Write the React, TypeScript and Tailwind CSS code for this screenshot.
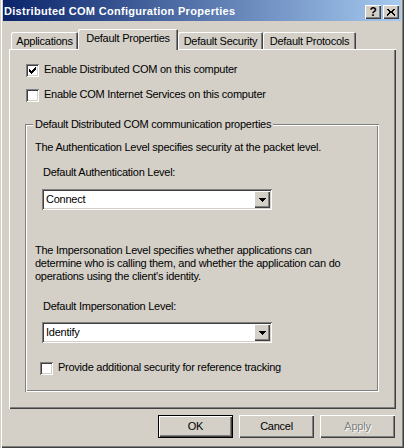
import React from "react";

const raised =
  "shadow-[inset_1px_1px_0_#fff,inset_-1px_-1px_0_#404040,inset_-2px_-2px_0_#808080]";
const sunken =
  "shadow-[inset_1px_1px_0_#808080,inset_-1px_-1px_0_#fff,inset_2px_2px_0_#404040,inset_-2px_-2px_0_#d4d0c8]";
const etched =
  "shadow-[inset_1px_1px_0_#808080,inset_-1px_-1px_0_#fff,inset_2px_2px_0_#fff,inset_-2px_-2px_0_#808080]";

const checkRows = ["......#", ".....##", "#...###", "##.###.", "#####..", ".###...", "..#...."];

function Checkbox({ checked }: { checked?: boolean }) {
  return (
    <div className={`w-[13px] h-[13px] mt-[1px] shrink-0 bg-white ${sunken}`}>
      {checked && (
        <svg width="13" height="13" viewBox="0 0 13 13" shapeRendering="crispEdges">
          {checkRows.map((row, y) =>
            row.split("").map((c, x) =>
              c === "#" ? <rect key={`${x}-${y}`} x={x + 3} y={y + 3} width="1" height="1" fill="#000" /> : null
            )
          )}
        </svg>
      )}
    </div>
  );
}

function CheckRow({ label, checked, className }: { label: string; checked?: boolean; className?: string }) {
  return (
    <div className={`flex items-start gap-[5px] h-[13px] ${className ?? ""}`}>
      <Checkbox checked={checked} />
      <span className="whitespace-nowrap">{label}</span>
    </div>
  );
}

function Combo({ value, className }: { value: string; className?: string }) {
  return (
    <div className={`w-[230px] h-[21px] p-[2px] flex bg-white ${sunken} ${className ?? ""}`}>
      <div className="flex-1 flex items-center pl-[2px]">{value}</div>
      <div className={`w-[16px] h-[17px] bg-[#d4d0c8] flex items-center justify-center ${raised}`}>
        <svg width="7" height="4" viewBox="0 0 7 4" shapeRendering="crispEdges">
          <rect x="0" y="0" width="7" height="1" fill="#000" />
          <rect x="1" y="1" width="5" height="1" fill="#000" />
          <rect x="2" y="2" width="3" height="1" fill="#000" />
          <rect x="3" y="3" width="1" height="1" fill="#000" />
        </svg>
      </div>
    </div>
  );
}

function PushButton({ label, isDefault, disabled }: { label: string; isDefault?: boolean; disabled?: boolean }) {
  const face = (
    <div className={`w-full h-full flex items-center justify-center bg-[#d4d0c8] ${raised}`}>
      <span className={disabled ? "text-[#808080] [text-shadow:1px_1px_0_#fff]" : ""}>{label}</span>
    </div>
  );
  if (isDefault) {
    return <div className="w-[75px] h-[23px] border border-black">{face}</div>;
  }
  return <div className="w-[75px] h-[23px]">{face}</div>;
}

function Tab({ label, width, selected }: { label: string; width: string; selected?: boolean }) {
  return (
    <div
      className={`${width} ${
        selected ? "h-[21px]" : "h-[17px] mb-[1px]"
      } pt-[3px] text-center bg-[#d4d0c8] rounded-t-[2px] shadow-[inset_1px_1px_0_#fff,inset_-1px_0_0_#404040,inset_-2px_0_0_#808080] whitespace-nowrap`}
    >
      {label}
    </div>
  );
}

export default function App() {
  return (
    <div className="w-[404px] h-[448px] px-[3px] bg-[#d4d0c8] text-black text-[11px] leading-[13px] tracking-[-0.25px] font-['Liberation_Sans',Arial,sans-serif] shadow-[inset_1px_0_0_#d4d0c8,inset_2px_0_0_#fff,inset_-1px_-1px_0_#404040,inset_-2px_-2px_0_#808080] overflow-hidden">
      {/* title bar */}
      <div className="h-[21px] flex justify-between pl-[1px] pr-[2px] bg-[linear-gradient(to_right,#0a246a,#a6caf0)]">
        <span className="pt-[5px] font-bold text-white tracking-[0.3px] whitespace-nowrap">
          Distributed COM Configuration Properties
        </span>
        <div className="flex gap-[2px] pt-[5px]">
          <div className={`w-[16px] h-[14px] bg-[#d4d0c8] flex items-center justify-center font-bold text-[12px] leading-[14px] ${raised}`}>
            ?
          </div>
          <div className={`w-[16px] h-[14px] bg-[#d4d0c8] flex items-center justify-center ${raised}`}>
            <svg width="8" height="7" viewBox="0 0 8 7" shapeRendering="crispEdges">
              {[0, 1, 2, 3, 4, 5, 6].map((i) => (
                <g key={i}>
                  <rect x={i < 3 ? i : i + 1} y={i} width="2" height="1" fill="#000" />
                  <rect x={i < 3 ? 6 - i : 5 - i} y={i} width="2" height="1" fill="#000" />
                </g>
              ))}
            </svg>
          </div>
        </div>
      </div>

      {/* tabs */}
      <div className="relative z-10 mt-[8px] h-[21px] pl-[8px] flex items-end">
        <Tab label="Applications" width="w-[67px]" />
        <Tab label="Default Properties" width="w-[100px]" selected />
        <Tab label="Default Security" width="w-[85px]" />
        <Tab label="Default Protocols" width="w-[93px]" />
      </div>

      {/* panel */}
      <div className="-mt-[1px] ml-[6px] w-[387px] h-[360px] pt-[14px] flex flex-col shadow-[inset_1px_1px_0_#fff,inset_-1px_-1px_0_#404040,inset_-2px_-2px_0_#808080]">
        <CheckRow label="Enable Distributed COM on this computer" checked className="ml-[17px]" />
        <CheckRow label="Enable COM Internet Services on this computer" className="ml-[17px] mt-[12px]" />

        <div className={`ml-[16px] mt-[23px] w-[354px] h-[268px] pl-[10px] flex flex-col ${etched}`}>
          <span className="-mt-[6px] -ml-[2px] px-[2px] w-fit bg-[#d4d0c8] whitespace-nowrap">
            Default Distributed COM communication properties
          </span>
          <p className="mt-[10px] whitespace-nowrap">The Authentication Level specifies security at the packet level.</p>
          <p className="mt-[12px] ml-[8px]">Default Authentication Level:</p>
          <Combo value="Connect" className="mt-[10px] ml-[7px]" />
          <p className="mt-[34px] whitespace-nowrap">
            The Impersonation Level specifies whether applications can
            <br />
            determine who is calling them, and whether the application can do
            <br />
            operations using the client's identity.
          </p>
          <p className="mt-[17px] ml-[8px]">Default Impersonation Level:</p>
          <Combo value="Identify" className="mt-[9px] ml-[7px]" />
          <CheckRow label="Provide additional security for reference tracking" className="mt-[18px] ml-[5px]" />
        </div>
      </div>

      {/* buttons */}
      <div className="mt-[6px] ml-[6px] w-[387px] pr-[1px] flex justify-end gap-[6px]">
        <PushButton label="OK" isDefault />
        <PushButton label="Cancel" />
        <PushButton label="Apply" disabled />
      </div>
    </div>
  );
}
